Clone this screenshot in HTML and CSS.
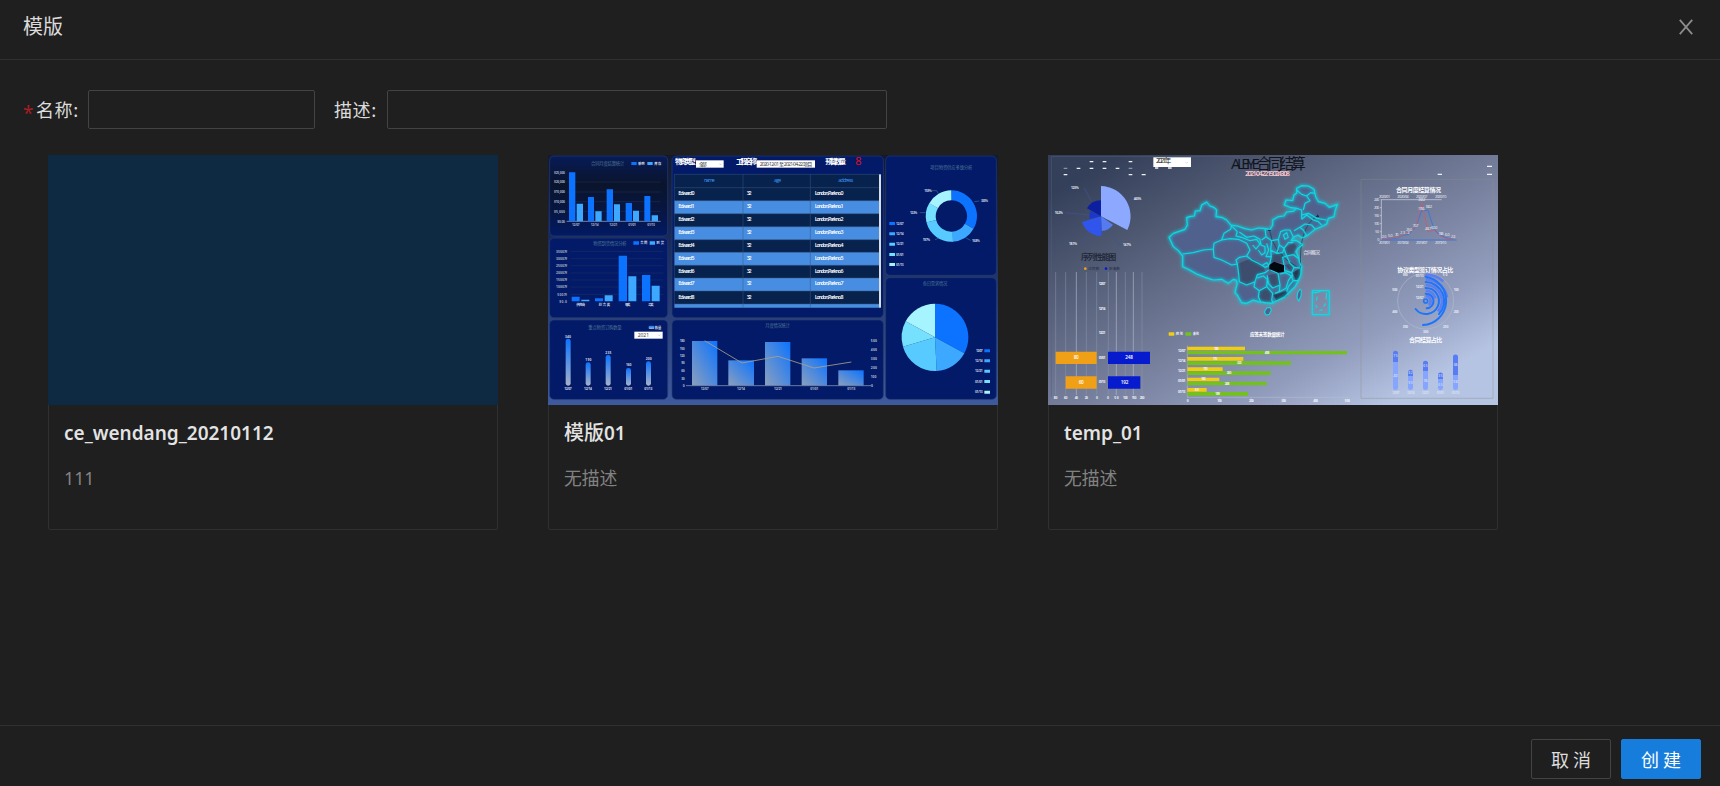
FILE: index.html
```html
<!DOCTYPE html>
<html lang="zh-CN">
<head>
<meta charset="utf-8">
<title>模版</title>
<link rel="stylesheet" href="styles.css">
</head>
<body>
<div class="modal">
  <header class="modal-header">
    <h1 class="modal-title">模版</h1>
    <button class="close" aria-label="close"><svg width="14" height="16" viewBox="0 0 14 16"><path d="M.8 .8 13.2 15.2M13.2 .8 .8 15.2"/></svg></button>
  </header>
  <main class="modal-body">
    <form class="form">
      <label class="label label-name"><span class="required">*</span>名称:</label>
      <input class="input input-name" type="text">
      <label class="label label-desc">描述:</label>
      <input class="input input-desc" type="text">
    </form>
    <section class="cards">
      <article class="card">
        <div class="cover cover-plain"></div>
        <div class="meta"><h2 class="name name-a">ce_wendang_20210112</h2><p class="desc">111</p></div>
      </article>
      <article class="card">
        <svg class="cover" viewBox="24 15 1350 750">
          <defs>
            <linearGradient id="frame" x1="0" y1="0" x2="0" y2="1"><stop offset="0" stop-color="#111a32"/><stop offset=".3" stop-color="#162858"/><stop offset="1" stop-color="#3e599d"/></linearGradient>
            <linearGradient id="dark" x1="0" y1="0" x2="0" y2="1"><stop offset="0" stop-color="#071b57"/><stop offset=".35" stop-color="#0a142c"/><stop offset=".7" stop-color="#071643"/><stop offset="1" stop-color="#021a64"/></linearGradient>
            <linearGradient id="bar" x1="1" y1="0" x2="0" y2="1"><stop offset="0" stop-color="#0b73ff"/><stop offset="1" stop-color="#8b9fbd"/></linearGradient>
            <linearGradient id="pill" x1="0" y1="0" x2="0" y2="1"><stop offset="0" stop-color="#0b73ff"/><stop offset="1" stop-color="#a7b2c8"/></linearGradient>
          </defs>
          <rect x="24" y="15" width="1350" height="750" fill="url(#frame)"/>
          <g fill="#021a67" stroke="#283c70" stroke-width="2">
            <rect x="29" y="18" width="354" height="240" rx="13" fill="url(#dark)"/>
            <rect x="29" y="264" width="354" height="239" rx="13"/>
            <rect x="29" y="510" width="354" height="238" rx="13"/>
            <rect x="396" y="18" width="634" height="485" rx="13"/>
            <rect x="396" y="510" width="634" height="238" rx="13"/>
            <rect x="1037" y="18" width="332" height="358" rx="13"/>
            <rect x="1037" y="383" width="332" height="365" rx="13"/>
          </g>
          <g class="t" fill="#4f7796" font-size="13">
            <text x="153" y="46" textLength="100">合同月度结算统计</text>
            <text x="160" y="284" textLength="100">物资到货情况分析</text>
            <text x="145" y="538" textLength="100">重点物资订购数量</text>
            <text x="676" y="530" textLength="74">月度情况统计</text>
            <text x="1171" y="58" textLength="126">项目物资供应多维分析</text>
            <text x="1148" y="404" textLength="74">各日需求情况</text>
          </g>
          <path d="M82 184H362M82 155H362M82 126H362M82 96H362M92 304H370M92 326H370M92 347H370M92 369H370M92 390H370M92 411H370M92 433H370" stroke="#394765" stroke-width="1.5" opacity=".6"/>
          <path d="M80 214H362" stroke="#a9b4cd" stroke-width="2"/>
          <path fill="#0b73ff" d="M87 67h19v147H87zM144 141h18v73h-18zM200 118h19v96h-19zM257 159h19v55h-19zM313 138h18v76h-18zM95 440h24v14H95zM165 445h24v9h-24zM236 317h25v137h-25zM306 375h25v79h-25zM274 36h16v9h-16zM280 274h17v10h-17z"/>
          <path fill="#3ca8ff" d="M110 161h19v53h-19zM166 184h19v30h-19zM222 163h18v51h-18zM279 182h18v32h-18zM335 196h19v18h-19zM124 449h24v5h-24zM194 436h24v18h-24zM265 379h24v75h-24zM335 407h24v47h-24zM322 36h16v9h-16zM329 274h16v10h-16z"/>
          <g class="t tiny" fill="#a6b0c4" font-size="10">
            <text x="42" y="71" textLength="33">¥25,000</text><text x="42" y="100" textLength="33">¥20,000</text><text x="42" y="130" textLength="33">¥15,000</text><text x="42" y="159" textLength="33">¥10,000</text><text x="42" y="188" textLength="33">¥5,000</text><text x="52" y="218" textLength="23">¥0.00</text>
            <text x="96" y="228" textLength="23">12/07</text><text x="152" y="228" textLength="24">12/14</text><text x="208" y="228" textLength="24">12/21</text><text x="265" y="228" textLength="23">01/01</text><text x="322" y="228" textLength="23">01/13</text>
            <text x="48" y="308" textLength="34">3500万</text><text x="48" y="330" textLength="34">3000万</text><text x="48" y="351" textLength="34">2500万</text><text x="48" y="373" textLength="34">2000万</text><text x="48" y="394" textLength="34">1500万</text><text x="48" y="415" textLength="34">1000万</text><text x="52" y="437" textLength="29">500万</text><text x="58" y="458" textLength="23">¥0.0</text>
          </g>
          <g class="t tiny" fill="#d2d9e7" font-size="10">
            <text x="294" y="44" textLength="20">采购</text><text x="343" y="44" textLength="21">库存</text><text x="301" y="282" textLength="21">合同</text><text x="349" y="282" textLength="23">到货</text>
            <text x="109" y="467" textLength="26">供应商</text><text x="176" y="467" textLength="34">综合类</text><text x="255" y="467" textLength="16">甲类</text><text x="325" y="467" textLength="16">乙类</text>
            <text x="75" y="563" textLength="18">340</text><text x="136" y="632" textLength="18">190</text><text x="196" y="611" textLength="18">235</text><text x="258" y="649" textLength="16">160</text><text x="317" y="629" textLength="18">200</text>
            <text x="73" y="719" textLength="22">12/07</text><text x="132" y="719" textLength="24">12/14</text><text x="192" y="719" textLength="24">12/21</text><text x="253" y="719" textLength="24">01/01</text><text x="313" y="719" textLength="24">01/13</text><text x="344" y="536" textLength="20">数量</text>
          </g>
          <g fill="url(#pill)"><rect x="77" y="566" width="15" height="141" rx="7"/><rect x="137" y="637" width="15" height="70" rx="7"/><rect x="197" y="615" width="15" height="92" rx="7"/><rect x="258" y="654" width="15" height="53" rx="7"/><rect x="318" y="634" width="15" height="73" rx="7"/><rect x="326" y="527" width="17" height="10" rx="3"/></g>
          <g fill="#fff"><rect x="283" y="545" width="85" height="21"/><rect x="468" y="31" width="83" height="22"/><rect x="650" y="31" width="175" height="22"/></g>
          <g class="t" fill="#333" font-size="15"><text x="293" y="560" textLength="34">2021</text><text x="476" y="48" textLength="24">全部</text><text x="659" y="48" textLength="158">2020-12-01 至 2021-04-22 项目</text></g>
          <path d="M355 554l3 4 3-4M538 41l3 4 3-4" fill="none" stroke="#999"/>
          <g class="t cell" fill="#fff" font-size="22"><text x="405" y="43" textLength="60">物资类型:</text><text x="588" y="43" textLength="61">工程名称:</text><text x="856" y="43" textLength="62">预警数量</text></g>
          <text class="t" x="946" y="45" fill="#f00b1d" font-size="33">8</text>
          <path fill="#08224e" d="M403 73h615v400H403z"/>
          <path fill="#478de2" d="M403 152h615v39H403zM403 230h615v39H403zM403 307h615v39H403zM403 384h615v39H403zM403 462h615v11H403z"/>
          <path d="M403 73h615M403 113h615M403 152h615M403 191h615M403 230h615M403 269h615M403 307h615M403 346h615M403 384h615M403 423h615M403 462h615M403 73v400M609 73v400M811 73v400" fill="none" stroke="#36587f" stroke-width="1.5"/>
          <rect x="1017" y="73" width="6" height="400" fill="#d8dce3"/>
          <g class="t" fill="#3c94f2" font-size="16"><text x="492" y="96" textLength="32">name</text><text x="702" y="96" textLength="22">age</text><text x="895" y="96" textLength="45">address</text></g>
          <g class="t cell" fill="#fff" font-size="16">
            <text x="415" y="135" textLength="49">Edward 0</text><text x="620" y="135" textLength="15">32</text><text x="824" y="135" textLength="87">London, Park no. 0</text>
            <text x="415" y="174" textLength="49">Edward 1</text><text x="620" y="174" textLength="15">32</text><text x="824" y="174" textLength="87">London, Park no. 1</text>
            <text x="415" y="213" textLength="49">Edward 2</text><text x="620" y="213" textLength="15">32</text><text x="824" y="213" textLength="87">London, Park no. 2</text>
            <text x="415" y="252" textLength="49">Edward 3</text><text x="620" y="252" textLength="15">32</text><text x="824" y="252" textLength="87">London, Park no. 3</text>
            <text x="415" y="291" textLength="49">Edward 4</text><text x="620" y="291" textLength="15">32</text><text x="824" y="291" textLength="87">London, Park no. 4</text>
            <text x="415" y="329" textLength="49">Edward 5</text><text x="620" y="329" textLength="15">32</text><text x="824" y="329" textLength="87">London, Park no. 5</text>
            <text x="415" y="368" textLength="49">Edward 6</text><text x="620" y="368" textLength="15">32</text><text x="824" y="368" textLength="87">London, Park no. 6</text>
            <text x="415" y="406" textLength="49">Edward 7</text><text x="620" y="406" textLength="15">32</text><text x="824" y="406" textLength="87">London, Park no. 7</text>
            <text x="415" y="446" textLength="49">Edward 8</text><text x="620" y="446" textLength="15">32</text><text x="824" y="446" textLength="87">London, Park no. 8</text>
          </g>
          <g fill="url(#bar)"><rect x="456" y="573" width="76" height="133"/><rect x="565" y="631" width="77" height="75"/><rect x="675" y="576" width="76" height="130"/><rect x="785" y="625" width="76" height="81"/><rect x="895" y="661" width="76" height="45"/></g>
          <path d="M438 707h555" stroke="#9baac5" stroke-width="2"/>
          <path d="M494 572 606 639 714 619 822 654 934 636" fill="none" stroke="#aaa08c" stroke-width="2.5"/>
          <g class="t tiny" fill="#b5bed1" font-size="10"><text x="419" y="576" textLength="15">180</text><text x="419" y="599" textLength="15">150</text><text x="419" y="621" textLength="15">120</text><text x="424" y="643" textLength="10">90</text><text x="424" y="665" textLength="10">60</text><text x="424" y="689" textLength="10">30</text><text x="428" y="710">0</text><text x="992" y="576" textLength="19">500</text><text x="992" y="603" textLength="19">400</text><text x="992" y="630" textLength="19">300</text><text x="992" y="656" textLength="19">200</text><text x="992" y="683" textLength="17">100</text><text x="993" y="710">0</text>
            <text x="482" y="719" textLength="24">12/07</text><text x="591" y="719" textLength="24">12/14</text><text x="702" y="719" textLength="24">12/21</text><text x="811" y="719" textLength="24">01/01</text><text x="922" y="719" textLength="24">01/13</text></g>
          <g fill="none" stroke-width="30">
            <path stroke="#0b73ff" d="M1234 136a62 62 0 0 1 53.700 93"/><path stroke="#3ca8ff" d="M1287.700 229a62 62 0 0 1-50.700 31"/><path stroke="#57cbff" d="M1238 260a62 62 0 0 1-64-46"/><path stroke="#76e0ff" d="M1174 214a62 62 0 0 1 7-47"/><path stroke="#a6f4ff" d="M1181 167a62 62 0 0 1 53-31"/>
          </g>
          <path d="M1176 122h14l5 9M1139 188h18M1185 269l12-5M1278 264l14 7M1303 155l15-2" fill="none" stroke="#4d89ae" stroke-width="1.5"/>
          <path fill="#0b73ff" d="M1185 562V461A101 101 0 0 1 1273 610z"/><path fill="#3ca8ff" d="M1185 562 1273 610A101 101 0 0 1 1190 663z"/><path fill="#57cbff" d="M1185 562 1190 663A101 101 0 0 1 1089 590z"/><path fill="#76e0ff" d="M1185 562 1089 590A101 101 0 0 1 1097 514z"/><path fill="#a6f4ff" d="M1185 562 1097 514A101 101 0 0 1 1185 461z"/>
          <g class="t tiny" fill="#c2cde0" font-size="10">
            <text x="1153" y="126" textLength="22">15.9%</text><text x="1110" y="192" textLength="22">12.3%</text><text x="1148" y="272" textLength="22">19.7%</text><text x="1296" y="275" textLength="23">16.8%</text><text x="1323" y="156" textLength="21">33.5%</text>
            <text x="1068" y="224" textLength="23">12/07</text><text x="1068" y="255" textLength="23">12/14</text><text x="1068" y="286" textLength="23">12/21</text><text x="1068" y="317" textLength="23">01/01</text><text x="1068" y="347" textLength="23">01/13</text>
            <text x="1308" y="606" textLength="20">12/07</text><text x="1305" y="637" textLength="23">12/14</text><text x="1305" y="667" textLength="23">12/21</text><text x="1305" y="698" textLength="23">01/01</text><text x="1305" y="730" textLength="23">01/13</text>
          </g>
          <path fill="#0b73ff" d="M1048 216h17v9h-17zM1333 598h17v9h-17z"/><path fill="#3ca8ff" d="M1048 247h17v9h-17zM1333 628h17v9h-17z"/><path fill="#57cbff" d="M1048 278h17v9h-17zM1333 659h17v9h-17z"/><path fill="#76e0ff" d="M1048 309h17v9h-17zM1333 690h17v9h-17z"/><path fill="#a6f4ff" d="M1048 339h17v9h-17zM1333 722h17v9h-17z"/>
        </svg>
        <div class="meta"><h2 class="name name-b">模版<span>01</span></h2><p class="desc">无描述</p></div>
      </article>
      <article class="card">
        <svg class="cover" viewBox="24 15 1350 750">
          <defs>
            <linearGradient id="sky" gradientUnits="userSpaceOnUse" x1="400" y1="-70" x2="900" y2="840"><stop offset="0" stop-color="#343f5a"/><stop offset=".2" stop-color="#4c566f"/><stop offset=".55" stop-color="#747e9b"/><stop offset=".8" stop-color="#919bbb"/><stop offset="1" stop-color="#b6c4e4"/></linearGradient>
            <filter id="glow" x="-20%" y="-20%" width="140%" height="140%"><feGaussianBlur stdDeviation="4"/></filter>
            <path id="land" d="M57 262 70 250 85 245 105 238 112 225 110 203 118 200 133 198 136 183 150 182 155 165 170 156 180 168 192 172 200 180 198 200 215 202 230 210 242 225 262 228 285 236 305 240 325 234 345 236 360 238 368 225 368 210 385 200 402 198 410 186 430 184 440 175 420 172 403 165 408 150 428 152 432 135 440 130 440 115 455 107 475 108 492 118 497 140 505 155 525 160 538 172 562 163 556 180 552 200 535 205 530 222 510 232 495 238 480 250 470 258 455 264 445 255 430 262 424 272 440 272 458 284 445 294 438 305 445 320 448 335 455 352 452 375 445 392 435 410 420 425 405 440 385 450 365 460 345 458 325 455 310 450 290 460 275 458 262 435 255 428 258 415 262 400 258 390 250 388 235 400 215 388 190 390 165 382 140 372 115 358 98 350 98 318 85 302 70 290Z"/>
            <path id="borders" d="M98 312 130 308 160 300 190 297 192 280 215 270 222 250 242 238 245 225M190 297 192 322 215 330 245 345 262 342 258 330 268 322 290 318 300 300 290 280 265 268 240 266 215 270M247 230 262 245 258 258 275 262 300 272 320 268 330 282 318 297 308 285M268 246 290 262 312 258 330 268 333 285 345 290 345 308 335 315 325 300M290 318 305 330 325 340 345 352 358 347 350 338 338 345M262 342 266 372 268 395 290 405 315 395 322 374 345 368 356 360M315 395 312 410 328 422 350 410 352 388 340 378 322 384M328 422 325 440 332 455M350 410 368 430 365 450 370 460M352 376 355 400 368 414 390 405 384 370 362 360M390 405 388 425 375 430M390 372 408 368 424 378 415 392 408 415 388 425M424 378 430 392 415 410 410 425M430 392 445 392M402 345 404 362 425 368 432 352 420 340 410 318 398 322 402 345M432 352 452 354M410 318 430 314 445 325M410 318 402 295 415 278 430 278M362 300 380 310 398 308 402 295M358 347 364 320 362 300 365 272 348 260M365 272 385 268 388 285 380 310M385 268 392 245 405 240 420 240 430 262M400 255 410 248 415 262 405 268ZM388 285 402 295M432 242 450 232 460 240 470 258M450 232 465 222 485 225 496 238M455 208 470 195 490 210 505 215 515 225M455 208 455 180 440 175M455 195 475 190 500 205 530 210M460 180 465 160 480 152 470 138 455 133 440 120M470 138 482 128 495 130M345 236 348 260 335 270M350 280 356 300 348 320 364 320M425 368 428 380"/>
          </defs>
          <rect x="24" y="15" width="1350" height="750" fill="url(#sky)"/>
          <g fill="none"><path d="M34 20H600M34 20V740" stroke="#53617f" stroke-width="1.500"/><path d="M963 88H1359V745H963z" stroke="#8b9180" stroke-width="2" opacity=".6"/></g>
          <path fill="#edf0f6" d="M149 33h11v4h-11zM188 33h11v4h-11zM266 33h11v4h-11zM110 53h11v4h-11zM149 53h11v4h-11zM188 53h11v4h-11zM227 53h11v4h-11zM71 72h11v4H71zM266 72h11v4h-11zM305 72h12v4h-12zM345 52h10v4h-10zM384 52h11v4h-11zM1341 47h15v4h-15zM1341 71h15v4h-15zM1193 71h13v4h-13z"/><path fill="#8992a5" d="M71 53h11v4H71zM266 53h11v4h-11z"/>
          <rect x="340" y="22" width="113" height="29" fill="#fff"/><text class="t" x="348" y="40" font-size="21" textLength="46" fill="#222">2021年</text><path d="M436 36l4 4 4-4" fill="none" stroke="#aaa"/>
          <text class="t" x="573" y="56" font-size="45" textLength="224" fill="#11141c">ALEIYE合同结算</text>
          <text class="t cell" x="615" y="79" font-size="22" textLength="135" fill="#fac8ce">2021-04-22 15:02:43:08</text>
          <path fill="#8ca9ff" d="M183 199V108A91 91 0 0 1 262 240z"/><path fill="#567bf1" d="M183 199 219 224A44 44 0 0 1 185 243z"/><path fill="#3055ec" d="M183 199 185 258A59 59 0 0 1 126 216z"/><path fill="#1c38cb" d="M183 199 149 207A35 35 0 0 1 151 183z"/><path fill="#0b1fa0" d="M183 199 141 175A48 48 0 0 1 183 151z"/>
          <path d="M132 112 154 154M74 188 148 195M122 282 142 252M209 243 236 284H248M264 154 278 147" fill="none" stroke="#405592" stroke-width="2"/>
          <g class="t tiny" fill="#dbe0eb" font-size="10"><text x="93" y="116" textLength="23">12.5%</text><text x="44" y="191" textLength="24">10.2%</text><text x="87" y="285" textLength="24">18.1%</text><text x="249" y="287" textLength="24">14.7%</text><text x="281" y="150" textLength="23">44.5%</text></g>
          <text class="t cell" x="123" y="331" font-size="24" textLength="106" fill="#232a3b">序列性能图</text>
          <circle cx="136" cy="356" r="4" fill="#efa016"/><circle cx="198" cy="356" r="4" fill="#071bce"/><g class="t" fill="#222b40" font-size="11"><text x="144" y="360" textLength="34">合同数</text><text x="206" y="360" textLength="34">申请数</text></g>
          <path d="M47 366V735M77 366V735M139 366V735M170 366V735M205 366V735M256 366V735M306 366V735" stroke="#8e97ab" stroke-width="1.500"/><path d="M109 366V735M229 366V735M280 366V735" stroke="#b0b7c6" stroke-width="2"/>
          <path fill="#efa016" d="M47 605h123v37H47zM77 679h93v37H77z"/><path fill="#071bce" d="M204 605h126v37H204zM204 679h97v37H204z"/>
          <g class="t cell" fill="#fff" font-size="14"><text x="101" y="628" textLength="15">80</text><text x="116" y="702" textLength="15">60</text><text x="256" y="628" textLength="23">248</text><text x="242" y="702" textLength="23">192</text></g>
          <g class="t tiny" fill="#edf0f6" font-size="10"><text x="176" y="406" textLength="20">12/07</text><text x="176" y="480" textLength="20">12/14</text><text x="176" y="552" textLength="20">12/21</text><text x="176" y="626" textLength="20">01/01</text><text x="176" y="700" textLength="20">01/13</text><text x="41" y="747" textLength="11">80</text><text x="72" y="747" textLength="10">60</text><text x="104" y="747" textLength="10">40</text><text x="134" y="747" textLength="10">20</text><text x="168" y="747">0</text><text x="201" y="747">0</text><text x="223" y="747" textLength="13">50</text><text x="249" y="747" textLength="14">100</text><text x="275" y="747" textLength="14">150</text><text x="299" y="747" textLength="14">200</text></g>
          <g transform="translate(330 0)">
            <use href="#land" fill="#50618d"/>
            <path fill="#3e4c6d" d="M262 342 305 325 340 345 345 368 320 375 315 395 290 405 268 395zM352 376 384 370 390 405 368 414zM364 315 398 308 402 340 364 335zM402 295 430 278 440 290 430 314 410 318zM328 422 350 410 368 430 365 455 330 455zM404 345 425 340 432 355 425 368z"/>
            <path fill="#28354f" d="M370 435 410 422 412 438 380 452zM428 368 450 355 452 377 438 392z"/>
            <g fill="none" stroke="#08dce8" stroke-width="8" filter="url(#glow)" opacity=".7"><use href="#land"/><use href="#borders" stroke-width="4"/><path d="M487 422h51v72h-51z" stroke-width="4"/></g>
            <path d="M503 197Q445 230 452 355M358 238Q368 310 440 350" fill="none" stroke="#174e5c" stroke-width="2.500"/><path fill="#12333f" d="M503 193l5 8h-10zM358 235l5 8h-10z"/>
            <g fill="none" stroke="#0cd9e3" stroke-width="3.500" stroke-linejoin="round"><use href="#land"/><use href="#borders"/><path fill="#50618d" d="M360 472 350 474 343 486 348 495 358 493 364 480zM450 417 443 428 441 442 446 454 453 438 454 422z"/><path d="M487 422h51v72h-51zM488 427 500 428 515 422M530 428 528 448M502 440l-3 12M497 464l4 10M508 482l10-3M521 469l6-9"/></g>
            <path fill="#020810" d="M358 345 372 335 402 346 402 365 385 368 358 357z"/>
            <text class="t" x="460" y="311" font-size="14" textLength="50" fill="#f0f2f8">合同概况</text>
          </g>
          <rect x="386" y="547" width="17" height="10" rx="2" fill="#efcd16"/><rect x="436" y="547" width="18" height="10" rx="2" fill="#72c11c"/><g class="t tiny" fill="#e7eaf2" font-size="10"><text x="407" y="555" textLength="22">应签</text><text x="458" y="555" textLength="19">未签</text></g>
          <text class="t cell" x="630" y="558" font-size="14" textLength="104" fill="#fff">应签未签数量统计</text>
          <path d="M442 587V742H926M538 742v5M634 742v5M731 742v5M827 742v5M922 742v5" fill="none" stroke="#b9c0d2" stroke-width="1.500"/>
          <path fill="#efcd16" d="M442 590h173v11H442zM442 621h168v11H442zM442 652h106v11H442zM442 683h96v11H442zM442 714h58v11H442z"/><path fill="#72c11c" d="M442 603h479v10H442zM442 634h311v11H442zM442 664h250v11H442zM442 695h238v11H442zM442 726h182v11H442z"/>
          <g class="t tiny" fill="#f2f4f9" font-size="10"><text x="414" y="605" textLength="22">12/07</text><text x="414" y="635" textLength="22">12/14</text><text x="414" y="667" textLength="22">12/21</text><text x="414" y="697" textLength="22">01/01</text><text x="414" y="728" textLength="22">01/13</text><text x="523" y="599" textLength="13">180</text><text x="519" y="630" textLength="13">175</text><text x="490" y="661" textLength="13">110</text><text x="484" y="691" textLength="13">100</text><text x="465" y="723" textLength="12">60</text><text x="674" y="612" textLength="14">498</text><text x="591" y="643" textLength="14">323</text><text x="560" y="673" textLength="14">260</text><text x="554" y="704" textLength="14">248</text><text x="526" y="735" textLength="14">189</text><text x="440" y="755">0</text><text x="532" y="755" textLength="13">100</text><text x="627" y="755" textLength="14">200</text><text x="724" y="755" textLength="14">300</text><text x="820" y="755" textLength="14">400</text><text x="914" y="755" textLength="16">500</text></g>
          <g transform="translate(870 0)">
            <g class="t cell" fill="#fff" font-size="18"><text x="198" y="126" textLength="135">合同月度结算情况</text><text x="202" y="365" textLength="168">协议类型签订情况占比</text><text x="237" y="575" textLength="100">合同结算占比</text></g>
            <path d="M154 149V270M152 149H335M150 173h4M150 197h4M150 221h4M150 245h4" fill="none" stroke="#d3d9e6" stroke-width="2"/><path d="M154 270H380" stroke="#4377cf" stroke-width="3"/>
            <path d="M155 267 181 266 201 264 220 256 237 253 257 230 275 183 294 181 312 238 332 256 351 264 370 268" fill="none" stroke="#3d78d3" stroke-width="3"/><path d="M155 267 181 265 201 262 220 256 237 245 257 230 275 157 294 246 312 240 332 259 351 266 370 268" fill="none" stroke="#b2667e" stroke-width="3"/>
            <g class="t" fill="#f3f5fa" font-size="11"><text x="147" y="143" textLength="33">2020/01</text><text x="202" y="143" textLength="34">2020/04</text><text x="258" y="143" textLength="34">2020/07</text><text x="315" y="143" textLength="34">2020/10</text><text x="147" y="283" textLength="33">2019/01</text><text x="202" y="283" textLength="34">2019/04</text><text x="258" y="283" textLength="34">2019/07</text><text x="315" y="283" textLength="34">2019/10</text><text x="132" y="153" textLength="15">240</text><text x="132" y="177" textLength="15">200</text><text x="132" y="202" textLength="15">150</text><text x="132" y="225" textLength="15">100</text><text x="136" y="249" textLength="11">50</text><text x="142" y="273">0</text>
              <text x="155" y="263" textLength="14">2.0</text><text x="174" y="260" textLength="14">5.0</text><text x="195" y="259" textLength="10">7.0</text><text x="211" y="251" textLength="28">23.2</text><text x="229" y="242" textLength="18">25.6</text><text x="248" y="230" textLength="17">70.7</text><text x="265" y="152" textLength="21">232.2</text><text x="264" y="180" textLength="20">175.6</text><text x="286" y="175" textLength="20">182.2</text><text x="285" y="241" textLength="18">48.7</text><text x="304" y="238" textLength="18">60.0</text><text x="325" y="255" textLength="15">18.8</text><text x="345" y="259" textLength="14">6.0</text><text x="363" y="263" textLength="13">2.3</text></g>
            <circle cx="287" cy="453" r="84" fill="none" stroke="#aeb8ce" stroke-width="2"/>
            <g fill="none" stroke="#5b7ff1" stroke-width="8"><path d="M287 374A79 79 0 0 1 340 394M287 388A65 65 0 0 1 351 442M287 405A48 48 0 0 1 324 484M287 422A31 31 0 0 1 316 445M287 438A15 15 0 0 1 296 465"/></g>
            <g fill="none" stroke="#1e75fb" stroke-width="6" stroke-linecap="round"><circle cx="287" cy="453" r="6" stroke-width="5"/><path d="M287 380A73 73 0 0 1 279 525M287 396A57 57 0 0 1 327 492M287 414A39 39 0 1 1 257 477M287 431A22 22 0 0 1 290 475"/></g>
            <g class="t tiny" fill="#e3e8f3" font-size="10"><text x="218" y="379" textLength="15">550</text><text x="338" y="379" textLength="14">50</text><text x="257" y="380" textLength="24">01/13</text><text x="257" y="413" textLength="24">12/21</text><text x="257" y="447" textLength="24">12/07</text><text x="187" y="423" textLength="15">500</text><text x="187" y="488" textLength="15">400</text><text x="218" y="533" textLength="16">350</text><text x="279" y="549" textLength="16">300</text><text x="339" y="533" textLength="16">250</text><text x="371" y="488" textLength="15">200</text><text x="371" y="423" textLength="15">100</text></g>
            <g fill="#86a5ff"><rect x="189" y="603" width="15" height="117" rx="7"/><rect x="234" y="660" width="15" height="60" rx="7"/><rect x="279" y="633" width="15" height="87" rx="7"/><rect x="324" y="668" width="15" height="52" rx="7"/><rect x="369" y="614" width="15" height="106" rx="7"/></g>
            <path fill="#587df2" d="M189 636v-26a7 7 0 0 1 15 0v26zM234 678v-11a7 7 0 0 1 15 0v11zM279 663v-23a7 7 0 0 1 15 0v23zM324 687v-12a7 7 0 0 1 15 0v12zM369 675v-54a7 7 0 0 1 15 0v54z"/>
            <g class="t" fill="#edf1fc" font-size="10"><text x="190" y="622" textLength="13">75</text><text x="190" y="681" textLength="13">202</text><text x="235" y="671" textLength="13">32</text><text x="235" y="702" textLength="13">90</text><text x="280" y="652" textLength="13">65</text><text x="280" y="695" textLength="13">135</text><text x="325" y="682" textLength="13">35</text><text x="325" y="707" textLength="13">65</text><text x="370" y="647" textLength="13">145</text><text x="370" y="699" textLength="13">98</text><text x="186" y="732" textLength="22">12/07</text><text x="231" y="732" textLength="22">12/14</text><text x="275" y="732" textLength="23">12/21</text><text x="320" y="732" textLength="23">01/01</text><text x="365" y="732" textLength="23">01/13</text></g>
          </g>
        </svg>
        <div class="meta"><h2 class="name name-c">temp_01</h2><p class="desc">无描述</p></div>
      </article>
    </section>
  </main>
  <footer class="modal-footer">
    <button class="btn">取 消</button>
    <button class="btn btn-primary">创 建</button>
  </footer>
</div>
</body>
</html>
```
FILE: styles.css
```css
* { box-sizing: border-box; }
body {
  margin: 0;
  background: #1f1f1f;
  color: rgba(255, 255, 255, .85);
  font: 17.5px/27.5px "Noto Sans", "Noto Sans CJK SC", sans-serif;
}
.modal { display: flex; flex-direction: column; height: 786px; }
.modal-header {
  display: flex;
  justify-content: space-between;
  height: 60px;
  padding: 12px 27px 0 23px;
  border-bottom: 1px solid #303030;
}
.modal-title { margin: 0; font: 400 20px/28px "Noto Sans CJK SC", sans-serif; }
.close { height: 30px; padding: 0; border: 0; background: none; }
.close svg { display: block; fill: none; stroke: #8c8c8c; stroke-width: 1.8; }
.modal-body { flex: 1; padding: 30px 0 0 23px; }
.form { display: flex; height: 39px; align-items: center; }
.label { font-family: "Noto Sans CJK SC", sans-serif; font-size: 18px; letter-spacing: .6px; white-space: nowrap; }
.label-name { width: 65px; display: flex; }
.label-desc { width: 53px; margin-left: 19px; }
.required { width: 13px; color: #a61d24; font: 19px/35px "Noto Sans", sans-serif; height: 27px; }
.input {
  height: 39px;
  padding: 5px 14px;
  border: 1px solid #434343;
  border-radius: 2px;
  background: transparent;
  color: inherit;
  font: inherit;
}
.input-name { width: 227px; }
.input-desc { width: 500px; }
.cards { display: flex; gap: 50px; padding: 26px 0 0 25px; }
.card { width: 450px; height: 375px; border: 1px solid #303030; border-radius: 2px; }
.cover { display: block; width: 450px; height: 250px; margin: -1px -1px 0; }
.cover-plain { background: #0e2a42; }
.meta { padding: 14px 15px; }
.name { margin: 0 0 18px; color: rgba(255, 255, 255, .88); font-size: 19px; font-weight: 600; line-height: 28px; white-space: nowrap; }
.name-b { font-size: 20px; font-weight: 500; }
.name-b span { font-size: 19px; font-weight: 600; }
.desc { margin: 0; color: rgba(255, 255, 255, .45); font-size: 17.8px; }
.t { font-family: "Open Sans", "Noto Sans CJK SC", sans-serif; }
.cell { font-weight: 600; }
.tiny { font-weight: 700; }
.modal-footer {
  display: flex;
  justify-content: flex-end;
  gap: 10px;
  height: 61px;
  padding: 13px 19px 0;
  border-top: 1px solid #303030;
}
.btn {
  width: 80px;
  height: 40px;
  padding: 0;
  border: 1px solid #434343;
  border-radius: 2px;
  background: transparent;
  color: rgba(255, 255, 255, .85);
  font: 18px/36px "Noto Sans CJK SC", sans-serif;
}
.btn-primary { border-color: #177ddc; background: #177ddc; color: #fff; }
```
